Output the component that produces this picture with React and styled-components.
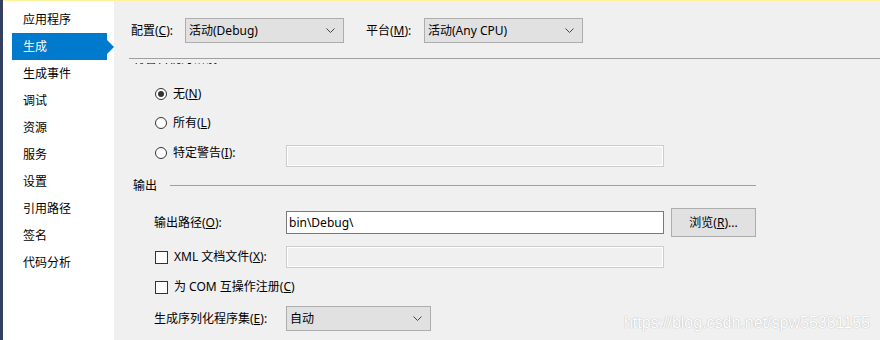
import styled, { createGlobalStyle } from "styled-components";

const GlobalStyle = createGlobalStyle`
  body {
    margin: 0;
    background: #f0f0f0;
    font-family: "Noto Sans", "Noto Sans CJK SC", sans-serif;
    font-size: 12px;
    color: #000;
  }
`;

const navItems = [
  "应用程序",
  "生成",
  "生成事件",
  "调试",
  "资源",
  "服务",
  "设置",
  "引用路径",
  "签名",
  "代码分析",
];

const Chevron = () => (
  <svg width="9" height="5" viewBox="0 0 9 5">
    <path d="M0.5 0.5 L4.5 4.5 L8.5 0.5" fill="none" stroke="#444" strokeWidth="1" />
  </svg>
);

const Dropdown = ({ width, children }) => (
  <SelectBox $w={width}>
    <span>{children}</span>
    <Chevron />
  </SelectBox>
);

export default function App() {
  return (
    <Frame>
      <GlobalStyle />
      <Body>
        <Sidebar>
          {navItems.map((name) => (
            <NavItem key={name} $active={name === "生成"}>
              {name}
            </NavItem>
          ))}
        </Sidebar>

        <Content>
          <Toolbar>
            <ToolLabel $w={54}>
              配置(<u>C</u>):
            </ToolLabel>
            <Dropdown width={159}>活动(Debug)</Dropdown>
            <ToolLabel $w={58} $ml={22}>
              平台(<u>M</u>):
            </ToolLabel>
            <Dropdown width={159}>活动(Any CPU)</Dropdown>
          </Toolbar>
          <Divider />

          {/* section scrolled mostly out of view */}
          <Clip>
            <span>将警告视为错误</span>
          </Clip>

          <Form>
            <Row $h={28} $mt={14}>
              <Choice>
                <Radio $checked />
                <span>
                  无(<u>N</u>)
                </span>
              </Choice>
            </Row>
            <Row $h={28} $mt={1}>
              <Choice>
                <Radio />
                <span>
                  所有(<u>L</u>)
                </span>
              </Choice>
            </Row>
            <Row $h={22} $mt={8} $top>
              <Choice>
                <Radio />
                <span>
                  特定警告(<u>I</u>):
                </span>
              </Choice>
              <TextBox $disabled />
            </Row>

            <Section>
              <span>输出</span>
              <Rule />
            </Section>

            <Row $h={29} $mt={14}>
              <span>
                输出路径(<u>O</u>):
              </span>
              <TextBox>bin\Debug\</TextBox>
              <Button>
                浏览(<u>R</u>)...
              </Button>
            </Row>
            <Row $h={22} $mt={9}>
              <Choice>
                <Check />
                <span>
                  XML 文档文件(<u>X</u>):
                </span>
              </Choice>
              <TextBox $disabled />
            </Row>
            <Row $h={22} $mt={8}>
              <Choice>
                <Check />
                <span>
                  为 COM 互操作注册(<u>C</u>)
                </span>
              </Choice>
            </Row>
            <Row $h={25} $mt={8}>
              <span>
                生成序列化程序集(<u>E</u>):
              </span>
              <Dropdown width={145}>自动</Dropdown>
            </Row>
          </Form>

          <Watermark>https://blog.csdn.net/spw55381155</Watermark>
        </Content>
      </Body>
    </Frame>
  );
}

const Frame = styled.div`
  display: flex;
  width: 880px;
  height: 340px;
  border-left: 3px solid #33415f;
  box-sizing: border-box;
  overflow: hidden;
`;

const Body = styled.div`
  flex: 1;
  display: flex;
  border-top: 1px solid #fff29d;
`;

const Sidebar = styled.nav`
  width: 111px;
  flex: none;
  background: #fff;
  padding-top: 5px;
`;

const NavItem = styled.div`
  position: relative;
  height: 27px;
  display: flex;
  align-items: center;
  line-height: 16px;
  padding-left: ${(p) => (p.$active ? "11px" : "20px")};
  margin-left: ${(p) => (p.$active ? "9px" : "0")};
  width: ${(p) => (p.$active ? "95px" : "auto")};
  box-sizing: border-box;
  background: ${(p) => (p.$active ? "#007acc" : "transparent")};
  color: ${(p) => (p.$active ? "#fff" : "#000")};

  &::after {
    content: "";
    display: ${(p) => (p.$active ? "block" : "none")};
    position: absolute;
    right: -7px;
    top: 7px;
    border-left: 7px solid #007acc;
    border-top: 7px solid transparent;
    border-bottom: 7px solid transparent;
  }
`;

const Content = styled.main`
  position: relative;
  flex: 1;
  padding-top: 17px;
  line-height: 16px;
`;

const Toolbar = styled.div`
  display: flex;
  align-items: center;
  height: 25px;
  padding-left: 17px;
`;

const ToolLabel = styled.span`
  width: ${(p) => p.$w}px;
  margin-left: ${(p) => p.$ml || 0}px;
  flex: none;
`;

const SelectBox = styled.div`
  width: ${(p) => p.$w}px;
  height: 25px;
  box-sizing: border-box;
  display: flex;
  align-items: center;
  justify-content: space-between;
  padding: 0 8px 0 3px;
  background: #e1e1e1;
  border: 1px solid #adadad;
`;

const Divider = styled.div`
  height: 1px;
  margin: 15px 0 0 15px;
  background: #a0a0a0;
`;

const Clip = styled.div`
  height: 3px;
  margin-top: 4px;
  overflow: hidden;
  padding-left: 19px;

  span {
    display: block;
    margin-top: -12px;
  }
`;

const Form = styled.div`
  width: 623px;
  margin-left: 19px;
`;

const Row = styled.div`
  display: grid;
  grid-template-columns: 132px 378px auto;
  align-items: ${(p) => (p.$top ? "start" : "center")};
  height: ${(p) => p.$h}px;
  margin-top: ${(p) => p.$mt}px;
  padding-left: 21px;
  white-space: nowrap;
`;

const Choice = styled.label`
  display: flex;
  align-items: center;
  gap: 6px;
  padding-left: 1px;
`;

const Radio = styled.span`
  width: 12px;
  height: 12px;
  flex: none;
  box-sizing: border-box;
  border: 1px solid #333;
  border-radius: 50%;
  background: #fff;
  display: flex;
  align-items: center;
  justify-content: center;

  &::after {
    content: "";
    display: ${(p) => (p.$checked ? "block" : "none")};
    width: 6px;
    height: 6px;
    border-radius: 50%;
    background: #333;
  }
`;

const Check = styled.span`
  width: 13px;
  height: 13px;
  flex: none;
  box-sizing: border-box;
  border: 1px solid #333;
  background: #fff;
`;

const TextBox = styled.div`
  height: ${(p) => (p.$disabled ? 22 : 23)}px;
  box-sizing: border-box;
  display: flex;
  align-items: center;
  padding-left: 2px;
  background: ${(p) => (p.$disabled ? "#f0f0f0" : "#fff")};
  border: 1px solid ${(p) => (p.$disabled ? "#cccccc" : "#7a7a7a")};
  box-shadow: ${(p) => (p.$disabled ? "inset 0 0 0 1px #fff" : "none")};
`;

const Button = styled.div`
  width: 85px;
  height: 29px;
  margin-left: 7px;
  box-sizing: border-box;
  display: flex;
  align-items: center;
  justify-content: center;
  background: #e1e1e1;
  border: 1px solid #adadad;
`;

const Section = styled.div`
  display: flex;
  align-items: center;
  gap: 13px;
  height: 16px;
  margin-top: 11px;
`;

const Rule = styled.div`
  flex: 1;
  height: 1px;
  margin-top: -1px;
  background: #a0a0a0;
`;

const Watermark = styled.div`
  position: absolute;
  right: 10px;
  bottom: 8px;
  font-family: "Liberation Sans", Arial, sans-serif;
  font-size: 16px;
  line-height: 18px;
  color: #fff;
  text-shadow: 0 0 1px #b4b4b4, 0 0 1px #c8c8c8;
`;
